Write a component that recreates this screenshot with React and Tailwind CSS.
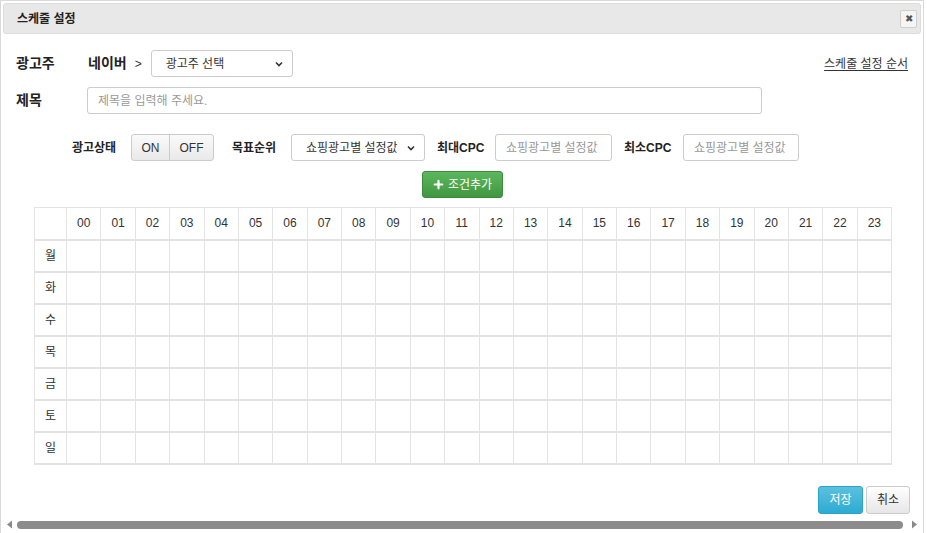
import { Plus } from 'lucide-react';

const hours = Array.from({ length: 24 }, (_, i) => String(i).padStart(2, '0'));
const days = ['월', '화', '수', '목', '금', '토', '일'];

const font = { fontFamily: '"Liberation Sans", "Noto Sans CJK KR", sans-serif' };

const Chevron = () => (
  <svg width="10" height="10" viewBox="0 0 10 10" className="shrink-0">
    <path d="M2 3.5 L5 6.5 L8 3.5" fill="none" stroke="#333" strokeWidth="1.6" />
  </svg>
);

const FakeSelect = ({ label, className }) => (
  <div
    className={`flex items-center justify-between rounded-[3px] border border-[#ccc] bg-white pl-[14px] pr-[8px] text-[12px] text-[#333] ${className}`}
  >
    <span>{label}</span>
    <Chevron />
  </div>
);

const ScheduleDialog = () => {
  return (
    <div className="relative flex h-[533px] w-[927px] flex-col overflow-hidden bg-white" style={font}>
      <div className="flex h-full w-[924px] flex-col border-l border-t border-r border-[#d9d9d9] bg-white">
        {/* header */}
        <div className="mx-[2px] mt-[2px] flex h-[31px] items-center justify-between rounded-[3px] border border-[#dcdcdc] bg-[#e8e8e8] pl-[13px] pr-[3px]">
          <span className="text-[12px] font-bold text-[#222]">스케줄 설정</span>
          <button className="flex h-[18px] w-[17px] items-center justify-center rounded-[2px] border border-[#cfcfcf] bg-[#f5f5f5] text-[10px] leading-none text-[#555]">
            ✖
          </button>
        </div>

        <div className="flex flex-col px-[15px]">
          {/* advertiser row */}
          <div className="mt-[16px] flex h-[27px] items-center">
            <span className="w-[72px] text-[14px] font-bold text-[#222]">광고주</span>
            <span className="text-[14px] font-bold text-[#222]">네이버</span>
            <span className="ml-[8px] text-[12px] text-[#333]">&gt;</span>
            <FakeSelect label="광고주 선택" className="ml-[9px] h-[27px] w-[142px]" />
            <a className="ml-auto mr-[0px] text-[12px] text-[#333] underline underline-offset-2">스케줄 설정 순서</a>
          </div>

          {/* title row */}
          <div className="mt-[10px] flex h-[27px] items-center">
            <span className="w-[71px] text-[14px] font-bold text-[#222]">제목</span>
            <div className="flex h-[27px] w-[675px] items-center rounded-[3px] border border-[#ccc] pl-[10px] text-[12px] text-[#999]">
              제목을 입력해 주세요.
            </div>
          </div>

          {/* condition row */}
          <div className="mt-[20px] flex h-[27px] items-center pl-[56px]">
            <span className="w-[59px] text-[12px] font-bold text-[#222]">광고상태</span>
            <div className="flex h-[27px] overflow-hidden rounded-[3px] border border-[#ccc] bg-gradient-to-b from-[#fafafa] to-[#e9e9e9] text-[12px] text-[#333]">
              <span className="flex w-[38px] items-center justify-center border-r border-[#ccc]">ON</span>
              <span className="flex w-[43px] items-center justify-center">OFF</span>
            </div>
            <span className="ml-[18px] w-[59px] text-[12px] font-bold text-[#222]">목표순위</span>
            <FakeSelect label="쇼핑광고별 설정값" className="h-[27px] w-[134px]" />
            <span className="ml-[12px] w-[58px] text-[12px] font-bold text-[#222]">최대CPC</span>
            <div className="flex h-[27px] w-[117px] items-center rounded-[3px] border border-[#ccc] pl-[10px] text-[12px] text-[#999]">
              쇼핑광고별 설정값
            </div>
            <span className="ml-[12px] w-[59px] text-[12px] font-bold text-[#222]">최소CPC</span>
            <div className="flex h-[27px] w-[116px] items-center rounded-[3px] border border-[#ccc] pl-[10px] text-[12px] text-[#999]">
              쇼핑광고별 설정값
            </div>
          </div>

          {/* add condition */}
          <div className="mt-[10px] flex justify-center">
            <button className="flex h-[27px] w-[81px] items-center justify-center gap-[3px] rounded-[3px] border border-[#3b8b3b] bg-gradient-to-b from-[#5cb85c] to-[#419641] text-[12px] text-white">
              <Plus size={13} strokeWidth={4} />
              조건추가
            </button>
          </div>

          {/* schedule grid */}
          <table className="ml-[18px] mt-[9px] w-[858px] table-fixed border-collapse text-[12px] text-[#333]">
            <thead>
              <tr className="h-[32px] border-b-2 border-[#e3e3e3]">
                <th className="w-[32px] border border-[#e3e3e3] font-normal"></th>
                {hours.map((h) => (
                  <th key={h} className="border border-[#e3e3e3] font-normal">
                    {h}
                  </th>
                ))}
              </tr>
            </thead>
            <tbody>
              {days.map((d) => (
                <tr key={d} className="h-[32px] border-b-2 border-[#e3e3e3]">
                  <td className="border-x border-[#e3e3e3] text-center">{d}</td>
                  {hours.map((h) => (
                    <td key={h} className="border-x border-[#e3e3e3]"></td>
                  ))}
                </tr>
              ))}
            </tbody>
          </table>

          {/* footer */}
          <div className="mt-[21px] -mr-[2px] flex justify-end gap-[3px]">
            <button className="flex h-[28px] w-[45px] items-center justify-center rounded-[3px] border border-[#28a4c9] bg-gradient-to-b from-[#5bc0de] to-[#2aabd2] text-[12px] text-white">
              저장
            </button>
            <button className="flex h-[28px] w-[44px] items-center justify-center rounded-[3px] border border-[#ccc] bg-gradient-to-b from-white to-[#e6e6e6] text-[12px] text-[#333]">
              취소
            </button>
          </div>
        </div>

        {/* horizontal scrollbar */}
        <div className="mt-auto mb-[4px] flex h-[9px] items-center gap-[4px] px-[5px]">
          <svg width="7" height="9" viewBox="0 0 7 9">
            <path d="M6 0.5 L1 4.5 L6 8.5 Z" fill="#8a8a8a" />
          </svg>
          <div className="h-[8px] flex-1 rounded-full bg-[#8c8c8c]" />
          <svg width="7" height="9" viewBox="0 0 7 9" className="ml-[4px]">
            <path d="M1 0.5 L6 4.5 L1 8.5 Z" fill="#8a8a8a" />
          </svg>
        </div>
      </div>
    </div>
  );
};

export default function App() {
  return <ScheduleDialog />;
}
